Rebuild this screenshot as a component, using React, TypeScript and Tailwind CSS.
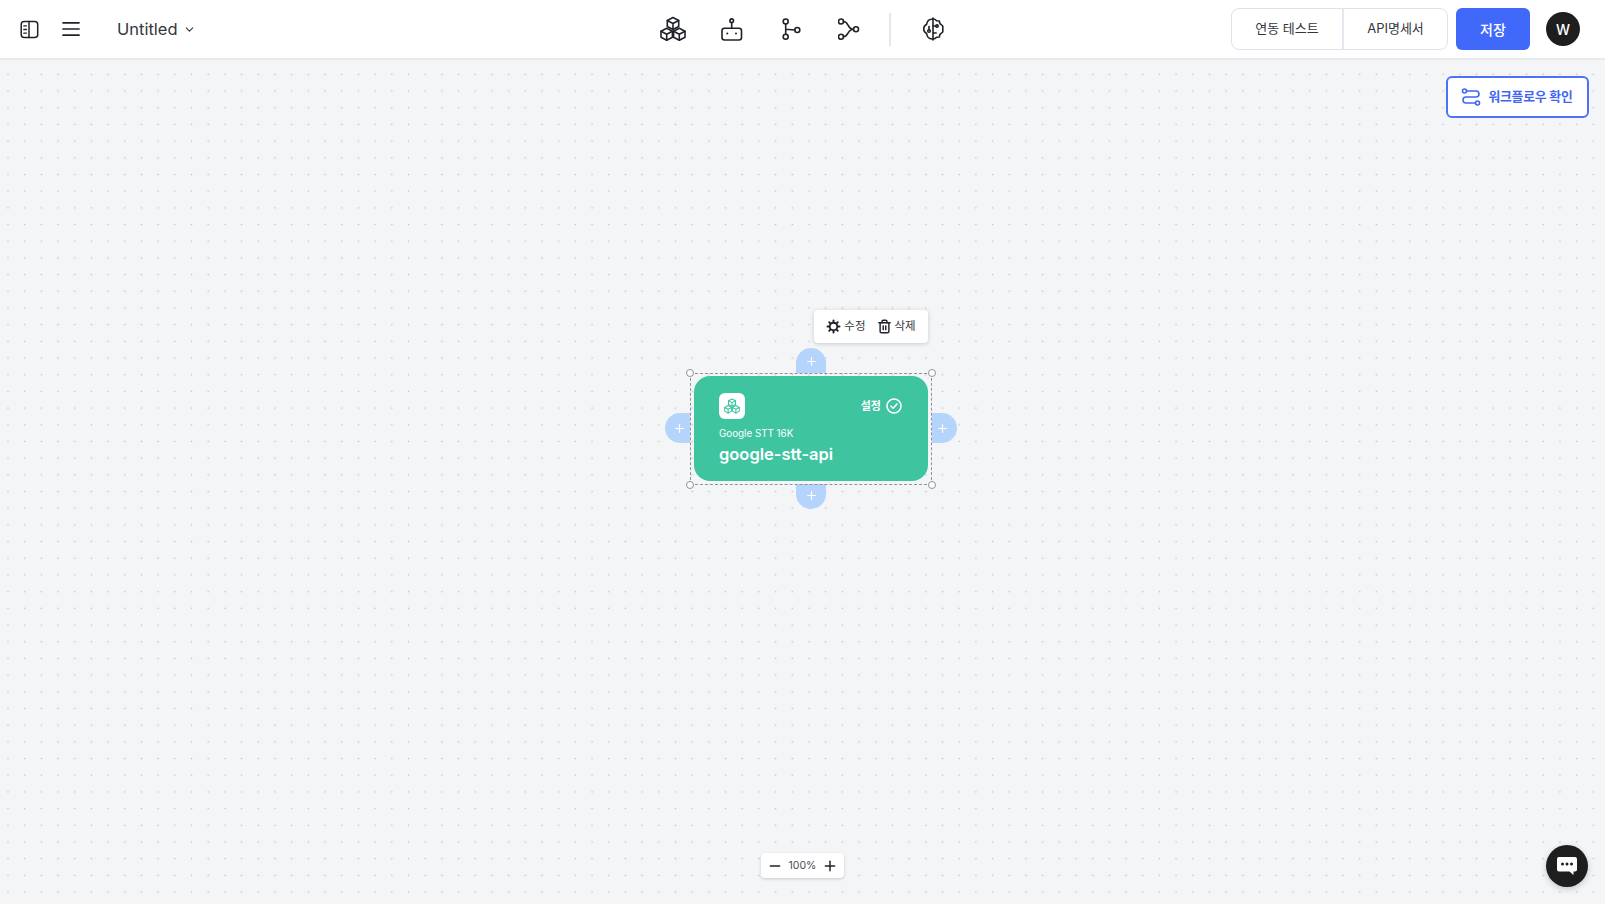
import React from "react";
import { ChevronDown, Minus, Plus, Trash2 } from "lucide-react";

const font = "font-['Inter','Noto_Sans_CJK_KR',sans-serif]";
const ink = "#1f2328";

function SidebarIcon() {
  return (
    <svg width="19" height="19" viewBox="0 0 19 19" fill="none" stroke={ink} strokeWidth="1.5" strokeLinecap="round" strokeLinejoin="round">
      <rect x="1.2" y="1.500" width="16.500" height="16" rx="3" />
      <path d="M9 1.500v16" />
      <path d="M3.800 5.800h2.600M3.800 9.500h2.600M3.800 13.200h2.600" strokeWidth="1.300" />
    </svg>
  );
}

function MenuIcon() {
  return (
    <svg width="18" height="16" viewBox="0 0 18 16" fill="none" stroke={ink} strokeWidth="1.700" strokeLinecap="round">
      <path d="M1 1.800h16M1 8h16M1 14.200h16" />
    </svg>
  );
}

function CubesIcon({ size = 26, color = ink, width = 1.6 }: { size?: number; color?: string; width?: number }) {
  return (
    <svg width={size} height={size} viewBox="0 0 26 26" fill="none" stroke={color} strokeWidth={width} strokeLinecap="round" strokeLinejoin="round">
      <path d="M13 1.500l5.700 3v6l-5.700 3-5.700-3v-6z" />
      <path d="M7.300 4.500l5.700 3 5.700-3M13 7.500v6" />
      <path d="M6.700 12.300l5.700 3v6l-5.700 3-5.700-3v-6z" />
      <path d="M1 15.300l5.700 3 5.700-3M6.700 18.300v6" />
      <path d="M19.300 12.300l5.700 3v6l-5.700 3-5.700-3v-6z" />
      <path d="M13.600 15.300l5.700 3 5.700-3M19.300 18.300v6" />
    </svg>
  );
}

// the header icons below use the reference's pixel coordinates as their viewBox
function BotIcon() {
  return (
    <svg width="24" height="26" viewBox="720 16 24 26" fill="none" stroke={ink} strokeWidth="1.600" strokeLinecap="round" strokeLinejoin="round">
      <circle cx="731.700" cy="20.700" r="1.800" />
      <path d="M731.700 22.500v5.800" />
      <rect x="722" y="28.300" width="19.500" height="11.700" rx="2.500" />
      <path d="M727.300 33.500h.01M736 33.500h.01" strokeWidth="2" />
    </svg>
  );
}

function BranchIcon() {
  return (
    <svg width="20" height="26" viewBox="782 16 20 26" fill="none" stroke={ink} strokeWidth="1.600" strokeLinecap="round" strokeLinejoin="round">
      <circle cx="785.700" cy="21.500" r="2.500" />
      <circle cx="785.700" cy="36.700" r="2.500" />
      <circle cx="797.300" cy="30" r="2.500" />
      <path d="M785.700 24v10.200M785.700 29.300l9.100.7" />
    </svg>
  );
}

function MergeIcon() {
  return (
    <svg width="22" height="26" viewBox="838 16 22 26" fill="none" stroke={ink} strokeWidth="1.600" strokeLinecap="round" strokeLinejoin="round">
      <circle cx="841" cy="21.500" r="2.500" />
      <circle cx="841" cy="36.700" r="2.500" />
      <circle cx="856" cy="29.300" r="2.500" />
      <path d="M843.500 21.500c5.500 0 3.500 7.800 10 7.800M843.500 36.700c5.500 0 3.500-7.400 10-7.400" />
    </svg>
  );
}

function BrainIcon() {
  return (
    <svg width="24" height="26" viewBox="921 16 24 26" fill="none" stroke={ink} strokeWidth="1.600" strokeLinecap="round" strokeLinejoin="round">
      <path d="M933 18v22" />
      <path d="M933 19c-3.500 0-6 2-6.300 5.300-1.800 1-3 2.800-3 4.700s1.200 3.700 3 4.700c.3 3.300 2.800 5.300 6.300 5.300" />
      <path d="M933 19c1.800 0 2.800.7 3.600 1.700l2.700.3.700 2.700 2.800 2.300v6l-2.800 2.300-.7 2.700-2.700.3c-.8 1-1.800 1.700-3.600 1.700" />
      <circle cx="937" cy="26" r="1.200" />
      <path d="M933 26h2.800M933 33h3.200" />
      <circle cx="929" cy="31" r="1.300" />
      <path d="M929 26.500v3.200" />
    </svg>
  );
}

function FlowIcon() {
  return (
    <svg width="20" height="20" viewBox="0 0 20 20" fill="none" stroke="#3f66f2" strokeWidth="1.600" strokeLinecap="round" strokeLinejoin="round">
      <circle cx="3.500" cy="4" r="2" />
      <circle cx="16.500" cy="16" r="2" />
      <path d="M5.500 4H15a2.800 2.800 0 0 1 0 6H5a2.800 2.800 0 0 0 0 6h9.500" />
    </svg>
  );
}

function GearIcon() {
  return (
    <svg width="15" height="15" viewBox="0 0 15 15" fill="none" stroke={ink} strokeLinecap="round" strokeLinejoin="round">
      <circle cx="7.500" cy="7.500" r="3.800" strokeWidth="1.900" />
      <path d="M7.500 1.500v1M7.500 12.500v1M1.500 7.500h1M12.500 7.500h1M3.300 3.300l.8.8M10.900 10.900l.8.8M3.300 11.700l.8-.8M10.900 4.100l.8-.8" strokeWidth="2" />
    </svg>
  );
}

function CheckCircle() {
  return (
    <svg width="16" height="16" viewBox="0 0 16 16" fill="none" stroke="#fff" strokeWidth="1.600" strokeLinecap="round" strokeLinejoin="round">
      <circle cx="8" cy="8" r="7" />
      <path d="M5 8.200l2.100 2.100L11 6" />
    </svg>
  );
}

function ChatIcon() {
  return (
    <svg width="22" height="20" viewBox="0 0 22 20" fill="none">
      <path d="M3 1h16a2 2 0 0 1 2 2v10.500a2 2 0 0 1-2 2h-1.500V19l-4-3.500H3a2 2 0 0 1-2-2V3a2 2 0 0 1 2-2z" fill="#fff" />
      <circle cx="6.500" cy="8" r="1.500" fill="#1e1e1f" />
      <circle cx="11" cy="8" r="1.500" fill="#1e1e1f" />
      <circle cx="15.500" cy="8" r="1.500" fill="#1e1e1f" />
    </svg>
  );
}

function Handle({ className }: { className: string }) {
  return <span className={`absolute size-[8px] rounded-full border border-[#8d929b] bg-white ${className}`} />;
}

function AddTab({ className }: { className: string }) {
  return (
    <div className={`absolute flex items-center justify-center bg-[#b4d4fc] text-white ${className}`}>
      <Plus size={13} strokeWidth={2.2} />
    </div>
  );
}

export default function App() {
  return (
    <div className={`flex h-[904px] w-full flex-col overflow-hidden bg-[#f4f5f7] ${font}`}>
      <header className="flex h-[60px] shrink-0 items-center border-b-2 border-[#e8eaee] bg-white">
        <div className="flex w-[660px] shrink-0 items-center pl-[20px]">
          <SidebarIcon />
          <span className="ml-[23px] flex">
            <MenuIcon />
          </span>
          <button type="button" className="ml-[37px] flex items-center gap-[5px] text-[16.500px] text-[#33373d]">
            Untitled
            <ChevronDown size={13} strokeWidth={2} />
          </button>
        </div>

        <div className="flex items-center">
          <CubesIcon />
          <span className="ml-[34px] flex"><BotIcon /></span>
          <span className="ml-[38px] flex"><BranchIcon /></span>
          <span className="ml-[36px] flex"><MergeIcon /></span>
          <span className="ml-[29px] h-[33px] w-[2px] bg-[#e3e7ee]" />
          <span className="ml-[30px] flex"><BrainIcon /></span>
        </div>

        <div className="ml-auto flex items-center pr-[25px]">
          <div className="flex h-[42px] overflow-hidden rounded-[8px] border border-[#dfe3e9] text-[13px] text-[#33373d]">
            <button type="button" className="w-[112px] border-r-2 border-[#e3e7ee]">연동 테스트</button>
            <button type="button" className="w-[103px]">API명세서</button>
          </div>
          <button type="button" className="ml-[8px] h-[42px] w-[74px] rounded-[6px] bg-[#4169f9] text-[14px] font-medium text-white">저장</button>
          <div className="ml-[16px] flex size-[34px] items-center justify-center rounded-full bg-[#1e1e1f] text-[14px] font-medium text-white">W</div>
        </div>
      </header>

      <main className="relative flex-1 bg-[#f4f5f7] bg-[radial-gradient(circle,#c2c6cc_0.7px,transparent_1.1px)] bg-[length:16.7px_16.7px] bg-[position:-0.35px_6px]">
        <button type="button" className="absolute left-[1446px] top-[16px] flex h-[42px] w-[143px] items-center justify-center gap-[7px] rounded-[6px] border-2 border-[#4f72f5] bg-white pr-[1px] text-[12.800px] font-semibold tracking-[-0.2px] text-[#3f66f2]">
          <FlowIcon />
          워크플로우 확인
        </button>

        {/* floating node toolbar */}
        <div className="absolute left-[814px] top-[250px] flex h-[33px] w-[114px] items-center justify-center gap-[11px] rounded-[4px] bg-white text-[11.500px] text-[#33373d] shadow-[0_1px_4px_rgba(60,70,90,0.25)]">
          <span className="flex items-center gap-[3px]">
            <GearIcon />
            수정
          </span>
          <span className="flex items-center gap-[3px]">
            <Trash2 size={15} strokeWidth={2.3} className="text-[#1f2328]" />
            삭제
          </span>
        </div>

        {/* selected node */}
        <AddTab className="left-[796px] top-[288px] h-[25px] w-[30px] rounded-t-[15px] pt-[2px]" />
        <AddTab className="left-[796px] top-[424px] h-[25px] w-[30px] rounded-b-[15px] pb-[3px]" />
        <AddTab className="left-[665px] top-[353px] h-[30px] w-[25px] rounded-l-[15px] pl-[3px]" />
        <AddTab className="left-[932px] top-[353px] h-[30px] w-[25px] rounded-r-[15px] pr-[5px]" />

        <div className="absolute left-[690px] top-[313px] h-[112px] w-[242px] border border-dashed border-[#8d929b]">
          <Handle className="-left-[5px] -top-[5px]" />
          <Handle className="-right-[5px] -top-[5px]" />
          <Handle className="-bottom-[5px] -left-[5px]" />
          <Handle className="-bottom-[5px] -right-[5px]" />
        </div>

        <div className="absolute left-[694px] top-[316px] flex h-[105px] w-[234px] flex-col rounded-[16px] bg-[#3ec49f] px-[25px] pt-[17px] text-white">
          <div className="flex items-center justify-between">
            <div className="flex size-[26px] items-center justify-center rounded-[6px] bg-white">
              <CubesIcon size={16} color="#3ec49f" width={1.7} />
            </div>
            <span className="flex items-center gap-[5px] pr-[1px] text-[11px] font-semibold">
              설정
              <CheckCircle />
            </span>
          </div>
          <div className="mt-[8px] text-[9.800px] leading-[14px]">Google STT 16K</div>
          <div className="mt-[2px] text-[16.500px] font-semibold leading-[22px]">google-stt-api</div>
        </div>

        {/* zoom control */}
        <div className="absolute left-[761px] top-[793px] flex h-[25px] w-[83px] items-center justify-between rounded-[4px] bg-white px-[6px] text-[10.500px] text-[#4a4e55] shadow-[0_1px_3px_rgba(60,70,90,0.25)]">
          <Minus size={16} strokeWidth={2.2} className="text-[#1f2328]" />
          100%
          <Plus size={16} strokeWidth={2.2} className="text-[#1f2328]" />
        </div>

        <button type="button" className="absolute left-[1546px] top-[785px] flex size-[42px] items-center justify-center rounded-full bg-[#1e1e1f] shadow-[0_2px_6px_rgba(0,0,0,0.2)]">
          <ChatIcon />
        </button>
      </main>
    </div>
  );
}
